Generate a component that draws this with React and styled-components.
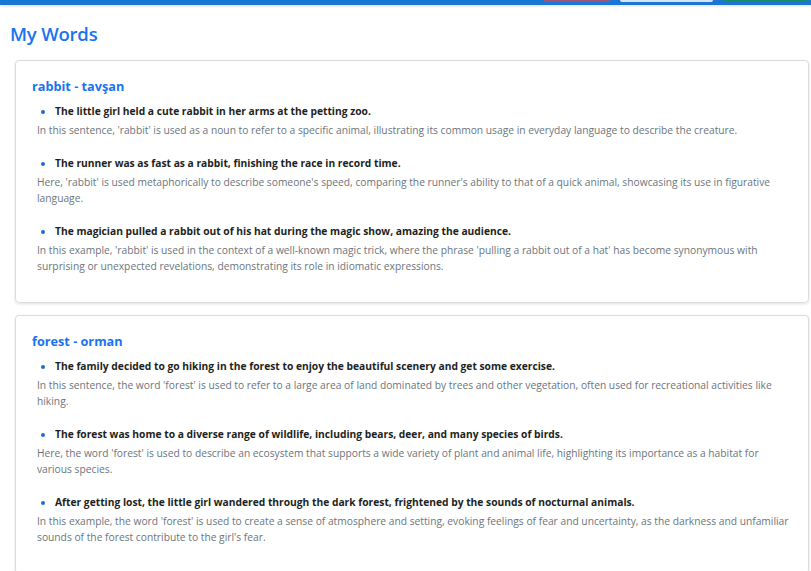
import styled, { createGlobalStyle } from "styled-components"

const GlobalStyle = createGlobalStyle`
    body {
        margin: 0;
        background: #fff;
        font-family: "Open Sans", "Noto Sans", sans-serif;
        color: #212529;
    }
`

const TopBar = styled.div`
    height: 5px;
    background: #1976d2;
    box-shadow: 0 1px 3px rgba(0, 0, 0, 0.15);
    display: flex;
    justify-content: flex-end;
    align-items: flex-start;
    gap: 10px;
    padding-right: 3px;
`

const BarButton = styled.div`
    width: ${ (p) => p.w }px;
    height: 2px;
    background: ${ (p) => p.color };
    border-radius: 0 0 2px 2px;
`

const Page = styled.main`
    padding: 16px 2px 0 15px;
`

const Heading = styled.h1`
    margin: 0 0 14px -5px;
    font-size: 18.5px;
    font-weight: 600;
    color: #1a73f0;
    letter-spacing: -0.2px;
`

const Card = styled.section`
    border: 1px solid #dcdcdc;
    border-radius: 4px;
    box-shadow: 0 1px 3px rgba(0, 0, 0, 0.12);
    padding: 16px 16px 27px 16px;
    margin-bottom: 12px;
`

const Title = styled.h2`
    margin: 0 0 8px 0;
    font-size: 12.7px;
    font-weight: 700;
    color: #1a73f0;
`

const List = styled.ul`
    list-style: none;
    margin: 0;
    padding: 0 0 0 5px;
`

const Item = styled.li`
    margin-bottom: 16px;
    &:last-child { margin-bottom: 0 }
`

const Sentence = styled.div`
    position: relative;
    padding-left: 18px;
    font-size: 10.25px;
    font-weight: 700;
    line-height: 17px;
    color: #1d1f22;
    &::before {
        content: "";
        position: absolute;
        left: 4px;
        top: 7px;
        width: 4px;
        height: 4px;
        border-radius: 50%;
        background: #1a6fc8;
    }
`

const Explanation = styled.p`
    margin: 2px 0 0 0;
    font-size: 10.25px;
    line-height: 16.5px;
    color: #6c757d;
`

const words = [
    {
        title: "rabbit - tavşan",
        items: [
            [ "The little girl held a cute rabbit in her arms at the petting zoo.",
              "In this sentence, 'rabbit' is used as a noun to refer to a specific animal, illustrating its common usage in everyday language to describe the creature." ],
            [ "The runner was as fast as a rabbit, finishing the race in record time.",
              "Here, 'rabbit' is used metaphorically to describe someone's speed, comparing the runner's ability to that of a quick animal, showcasing its use in figurative language." ],
            [ "The magician pulled a rabbit out of his hat during the magic show, amazing the audience.",
              "In this example, 'rabbit' is used in the context of a well-known magic trick, where the phrase 'pulling a rabbit out of a hat' has become synonymous with surprising or unexpected revelations, demonstrating its role in idiomatic expressions." ],
        ],
    },
    {
        title: "forest - orman",
        items: [
            [ "The family decided to go hiking in the forest to enjoy the beautiful scenery and get some exercise.",
              "In this sentence, the word 'forest' is used to refer to a large area of land dominated by trees and other vegetation, often used for recreational activities like hiking." ],
            [ "The forest was home to a diverse range of wildlife, including bears, deer, and many species of birds.",
              "Here, the word 'forest' is used to describe an ecosystem that supports a wide variety of plant and animal life, highlighting its importance as a habitat for various species." ],
            [ "After getting lost, the little girl wandered through the dark forest, frightened by the sounds of nocturnal animals.",
              "In this example, the word 'forest' is used to create a sense of atmosphere and setting, evoking feelings of fear and uncertainty, as the darkness and unfamiliar sounds of the forest contribute to the girl's fear." ],
        ],
    },
]

const App = () => {
    return (
        <>
            <GlobalStyle />
            <TopBar>
                <BarButton w={67} color="#a0527a" />
                <BarButton w={93} color="#d6e4f5" />
                <BarButton w={85} color="#1d8a6a" />
            </TopBar>
            <Page>
                <Heading>My Words</Heading>
                {words.map(( w ) => (
                    <Card key={w.title}>
                        <Title>{w.title}</Title>
                        <List>
                            {w.items.map(( [ s, e ] ) => (
                                <Item key={s}>
                                    <Sentence>{s}</Sentence>
                                    <Explanation>{e}</Explanation>
                                </Item>
                            ))}
                        </List>
                    </Card>
                ))}
            </Page>
        </>
    )
}

export default App
